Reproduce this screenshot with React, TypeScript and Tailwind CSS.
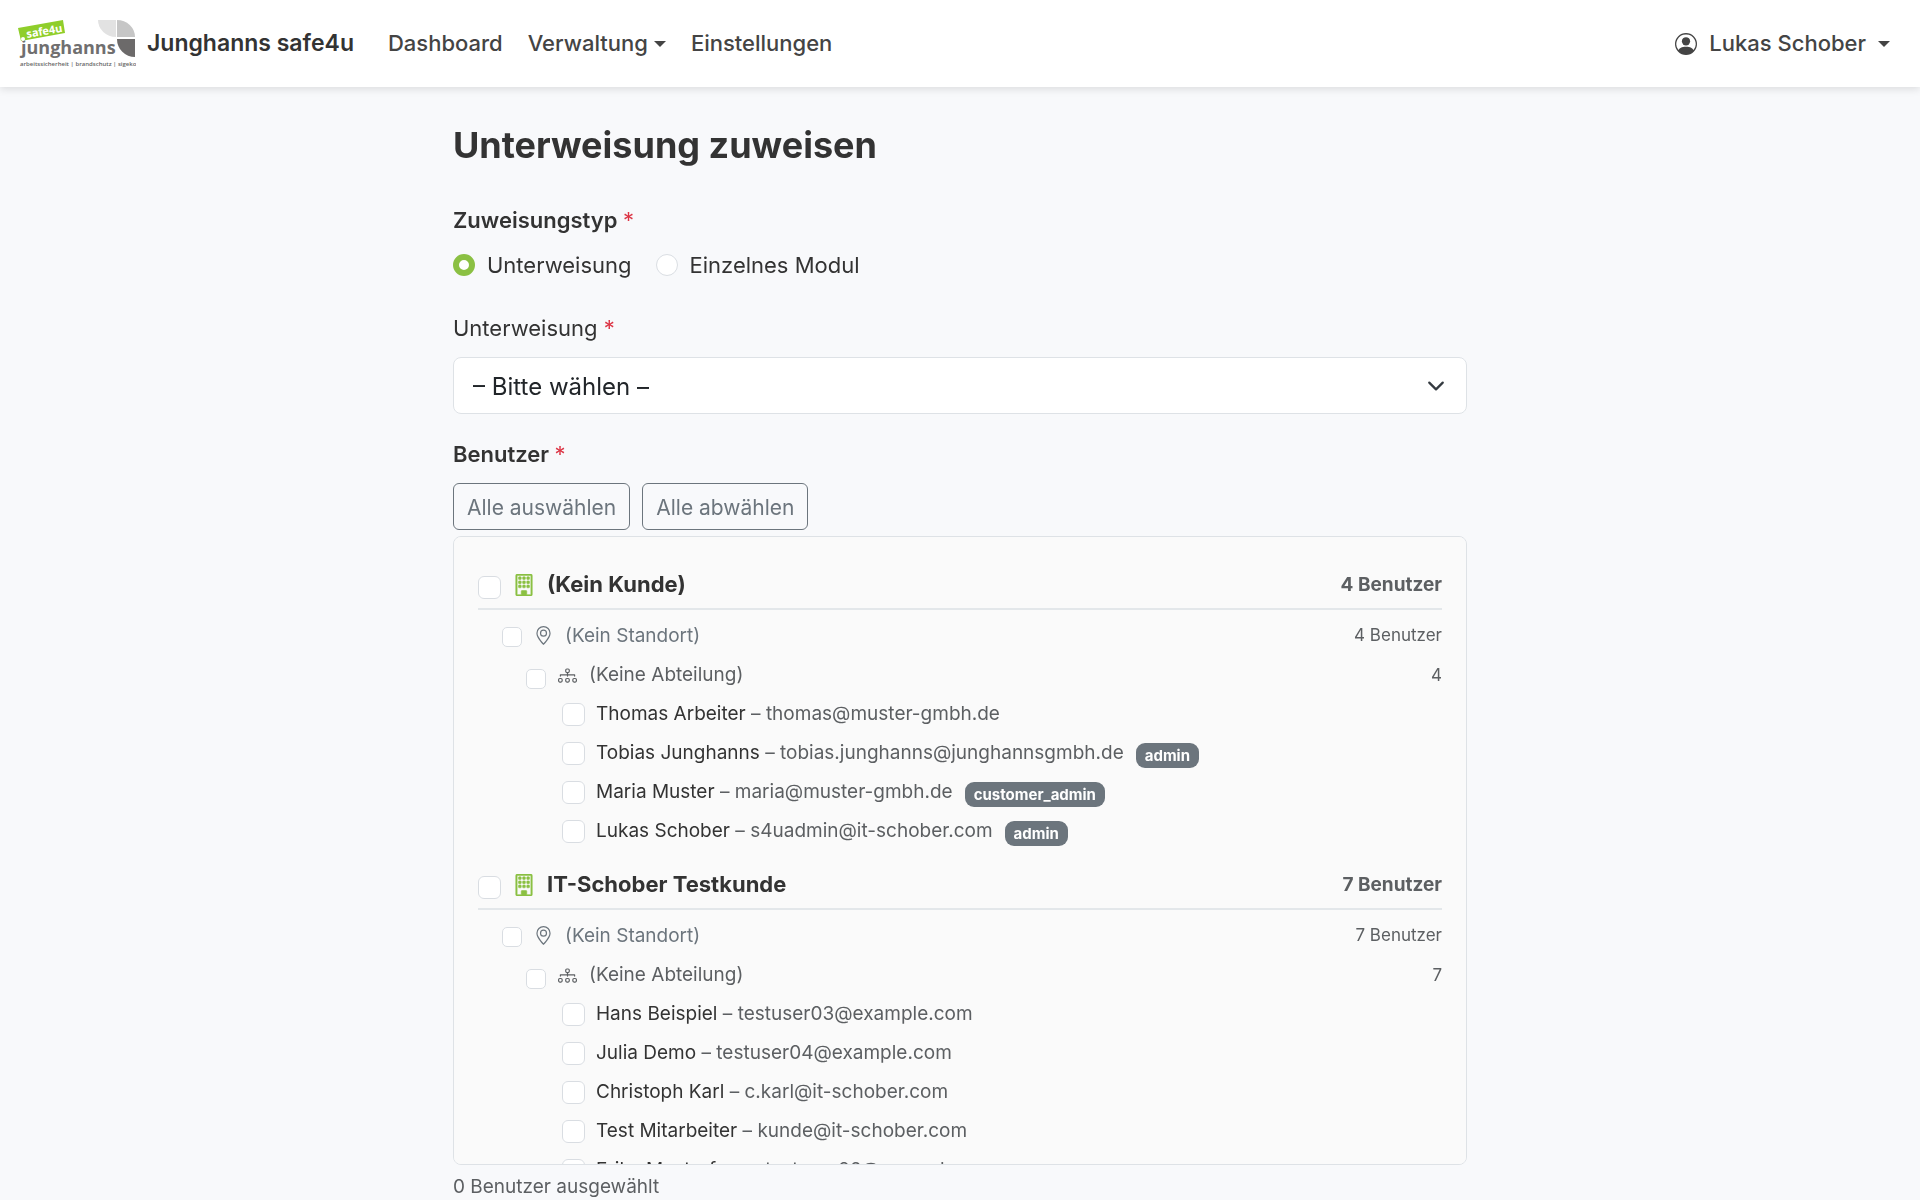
import { useState } from 'react';
import { BsBuilding, BsDiagram3, BsGeoAlt, BsPersonCircle } from 'react-icons/bs';

interface User {
  name: string;
  email: string;
  role?: string;
}

interface CustomerGroup {
  id: string;
  customer: string;
  count: number;
  users: User[];
}

const groups: CustomerGroup[] = [
  {
    id: 'none',
    customer: '(Kein Kunde)',
    count: 4,
    users: [
      { name: 'Thomas Arbeiter', email: 'thomas@muster-gmbh.de' },
      { name: 'Tobias Junghanns', email: 'tobias.junghanns@junghannsgmbh.de', role: 'admin' },
      { name: 'Maria Muster', email: 'maria@muster-gmbh.de', role: 'customer_admin' },
      { name: 'Lukas Schober', email: 's4uadmin@it-schober.com', role: 'admin' },
    ],
  },
  {
    id: 'it-schober',
    customer: 'IT-Schober Testkunde',
    count: 7,
    users: [
      { name: 'Hans Beispiel', email: 'testuser03@example.com' },
      { name: 'Julia Demo', email: 'testuser04@example.com' },
      { name: 'Christoph Karl', email: 'c.karl@it-schober.com' },
      { name: 'Test Mitarbeiter', email: 'kunde@it-schober.com' },
      { name: 'Erika Musterfrau', email: 'testuser02@example.com' },
    ],
  },
];

const checkboxBase =
  'shrink-0 appearance-none border border-[#d9dde2] bg-white checked:border-[#8bc043] checked:bg-[#8bc043]';

const radioBase =
  'size-[22px] appearance-none rounded-full border border-[#d9dde2] bg-white checked:border-[6px] checked:border-[#8bc043]';

const Logo = () => (
  <svg width="118" height="50" viewBox="0 0 118 50" aria-hidden="true">
    <path d="M80 1h18v17A18 17 0 0 1 80 1Z" fill="#e2e2e2" />
    <path d="M99 1a18 17 0 0 1 18 17H99Z" fill="#c6c6c6" />
    <path d="M99 20h18v18A18 18 0 0 1 99 20Z" fill="#6c6a6a" />
    <text x="3" y="35" fontSize="18" fontWeight="700" fill="#706f6f" fontFamily="'Open Sans', sans-serif">
      junghanns
    </text>
    <path d="M0 9 45 1l2 13L3 22Z" fill="#8fce2b" />
    <circle cx="5" cy="20" r="2" fill="#fff" />
    <text
      transform="translate(9 19) rotate(-10)"
      fontSize="11"
      fontWeight="700"
      fill="#fff"
      fontFamily="'Open Sans', sans-serif"
    >
      safe4u
    </text>
    <text x="2" y="47" fontSize="6" fontWeight="600" fill="#666" fontFamily="'Open Sans', sans-serif">
      arbeitssicherheit | brandschutz | sigeko
    </text>
  </svg>
);

const Caret = () => (
  <svg width="12" height="6" viewBox="0 0 12 6" fill="currentColor" aria-hidden="true">
    <path d="M0 0h12L6 6Z" />
  </svg>
);

const Required = () => <span className="font-normal text-[#dc3545]">*</span>;

const Navbar = () => (
  <header className="relative flex h-[87px] items-center bg-white px-[18px] text-[22px] font-medium text-[#444] shadow-[0_2px_8px_rgba(0,0,0,0.12)]">
    <a href="#" className="flex items-center gap-[11px] text-[23px] font-semibold text-[#333]">
      <Logo />
      Junghanns safe4u
    </a>
    <nav className="ml-[34px] flex items-center gap-[25px]">
      <a href="#dashboard">Dashboard</a>
      <button type="button" className="flex items-center gap-1.5">
        Verwaltung
        <Caret />
      </button>
      <a href="#einstellungen">Einstellungen</a>
    </nav>
    <button type="button" className="mr-3 ml-auto flex items-center gap-3">
      <BsPersonCircle size={22} />
      Lukas Schober
      <Caret />
    </button>
  </header>
);

const GroupBlock = ({ group }: { group: CustomerGroup }) => (
  <div className="mb-2.5">
    <div className="flex h-[49px] items-center border-b-2 border-[#e3e7ea] text-[#333]">
      <input id={`c-${group.id}`} type="checkbox" className={`${checkboxBase} mt-1.5 size-[23px] rounded-md`} />
      <label htmlFor={`c-${group.id}`} className="ml-3 flex items-center gap-3 text-[22px] font-bold">
        <BsBuilding size={22} strokeWidth={0.4} className="text-[#8bc043]" />
        {group.customer}
      </label>
      <span className="mt-0.5 ml-auto text-[19px] font-bold text-[#5c5f62]">{group.count} Benutzer</span>
    </div>

    <div className="mt-1.5 flex h-10 items-center pl-6">
      <input id={`s-${group.id}`} type="checkbox" className={`${checkboxBase} mt-0.5 size-5 rounded-[5px]`} />
      <label htmlFor={`s-${group.id}`} className="ml-3 flex items-center gap-3 text-[19px] text-[#6c757d]">
        <BsGeoAlt size={19} className="mb-0.5" />
        (Kein Standort)
      </label>
      <span className="ml-auto text-[17px] text-[#5c5f62]">{group.count} Benutzer</span>
    </div>

    <div className="flex h-[39px] items-center pl-12 text-[#5c5f62]">
      <input id={`a-${group.id}`} type="checkbox" className={`${checkboxBase} mt-1.5 size-5 rounded-[5px]`} />
      <label htmlFor={`a-${group.id}`} className="ml-3 flex items-center gap-3 text-[19px]">
        <BsDiagram3 size={19} />
        (Keine Abteilung)
      </label>
      <span className="ml-auto text-[17px]">{group.count}</span>
    </div>

    <ul>
      {group.users.map((user) => (
        <li key={user.email} className="flex h-[39px] items-center pl-[84px] text-[19px]">
          <input id={user.email} type="checkbox" className={`${checkboxBase} size-[23px] rounded-md`} />
          <label htmlFor={user.email} className="ml-[11px] flex items-center text-[#333]">
            <span className="whitespace-pre">{user.name} </span>
            <span className="text-[#5c5f62]">– {user.email}</span>
            {user.role && (
              <span className="mt-1 ml-3 rounded-[9px] bg-[#6c757d] px-[9px] text-[15px] leading-[25px] font-bold text-white">
                {user.role}
              </span>
            )}
          </label>
        </li>
      ))}
    </ul>
  </div>
);

const App = () => {
  const [type, setType] = useState('unterweisung');

  return (
    <div className="min-h-screen bg-[#f8f9fb] font-['Inter',sans-serif] text-[#333]">
      <Navbar />
      <main className="mx-auto max-w-[1014px]">
        <h1 className="pt-9 text-[36px] leading-[44px] font-bold">Unterweisung zuweisen</h1>

        <form>
          <fieldset className="mt-9 text-[22px] leading-[34px]">
            <legend className="font-semibold">
              Zuweisungstyp <Required />
            </legend>
            <div className="mt-[11px] flex gap-6">
              <label className="flex items-center gap-3">
                <input
                  type="radio"
                  name="type"
                  checked={type === 'unterweisung'}
                  onChange={() => setType('unterweisung')}
                  className={radioBase}
                />
                Unterweisung
              </label>
              <label className="flex items-center gap-3">
                <input
                  type="radio"
                  name="type"
                  checked={type === 'modul'}
                  onChange={() => setType('modul')}
                  className={radioBase}
                />
                Einzelnes Modul
              </label>
            </div>
          </fieldset>

          <label htmlFor="unterweisung" className="mt-[29px] block text-[22px] leading-[34px]">
            Unterweisung <Required />
          </label>
          <div className="mt-3 grid items-center">
            <select
              id="unterweisung"
              className="col-start-1 row-start-1 h-[57px] w-full appearance-none rounded-lg border border-[#dee2e6] bg-white px-[19px] pt-0.5 text-[24px] text-[#212529]"
            >
              <option>– Bitte wählen –</option>
            </select>
            <svg
              width="18"
              height="18"
              viewBox="0 0 16 16"
              fill="none"
              stroke="#343a40"
              strokeWidth="2"
              strokeLinecap="round"
              strokeLinejoin="round"
              className="pointer-events-none col-start-1 row-start-1 mr-[22px] justify-self-end"
              aria-hidden="true"
            >
              <path d="m2 5 6 6 6-6" />
            </svg>
          </div>

          <h2 className="mt-[23px] text-[22px] leading-[34px] font-semibold">
            Benutzer <Required />
          </h2>
          <div className="mt-3 flex gap-3">
            <button
              type="button"
              className="h-[47px] rounded-md border border-[#6c757d] px-[13px] pt-0.5 text-[21px] text-[#6c757d]"
            >
              Alle auswählen
            </button>
            <button
              type="button"
              className="h-[47px] rounded-md border border-[#6c757d] px-[13px] pt-0.5 text-[21px] text-[#6c757d]"
            >
              Alle abwählen
            </button>
          </div>

          <div className="mt-1.5 h-[629px] overflow-y-auto rounded-lg border border-[#dee2e6] bg-[#fafafa] p-6 [scrollbar-width:none]">
            {groups.map((group) => (
              <GroupBlock key={group.id} group={group} />
            ))}
          </div>
          <p className="mt-2 text-[19px] leading-[28px] text-[#5c5f62]">0 Benutzer ausgewählt</p>
        </form>
      </main>
    </div>
  );
};

export default App;
